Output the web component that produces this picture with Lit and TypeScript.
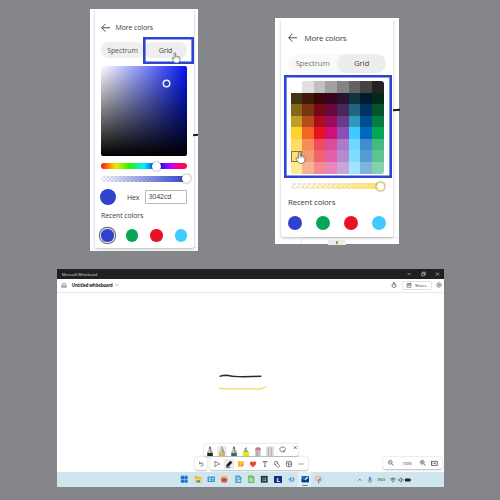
import { LitElement, html, css, svg, nothing } from "lit";
import { customElement, property } from "lit/decorators.js";
import { classMap } from "lit/directives/class-map.js";

const RECENT = ["#3042cd", "#07a556", "#e81226", "#40cbff"];

const BASE = ["#ffd22e", "#f26522", "#e81224", "#d10f7a", "#904db5", "#3fcbff", "#0068bf", "#06a556"];
const SHADES = ["#40360f", "#41190b", "#3c0409", "#35051f", "#27142f", "#12333f", "#001b31", "#022a17"];
const GRAYS = ["#ffffff", "#e0e0e0", "#c1c1c1", "#a2a2a2", "#838383", "#626262", "#434343", "#222222"];

const mix = (c: string, t: string, a: number) => {
  const p = (h: string, i: number) => parseInt(h.slice(i, i + 2), 16);
  return `rgb(${[1, 3, 5].map((i) => Math.round(p(c, i) * (1 - a) + p(t, i) * a)).join(",")})`;
};

const GRID = [
  GRAYS,
  SHADES,
  BASE.map((c) => mix(c, "#000000", 0.5)),
  BASE.map((c) => mix(c, "#000000", 0.25)),
  BASE,
  BASE.map((c) => mix(c, "#ffffff", 0.25)),
  BASE.map((c) => mix(c, "#ffffff", 0.34)),
  BASE.map((c) => mix(c, "#ffffff", 0.5)),
];

const backArrow = html`<svg class="back" viewBox="0 0 10 10">
  <path d="M9.6 5H.8M4.7.9.7 5l4 4.1" fill="none" stroke="#333" stroke-width=".9" />
</svg>`;

const hand = html`<svg class="hand" viewBox="0 0 10 12">
  <path
    d="M3 7V1.6c0-1.3 1.6-1.3 1.6 0v3c.3-.5 1.4-.4 1.6.2.4-.5 1.4-.3 1.5.3.5-.4 1.4-.1 1.4.6v2.5C9.1 10 8 11.4 6.500 11.400H5C3.700 11.400 3.100 10.500 2.500 9.600L.9 7.400c-.6-1 .6-1.600 1.300-.9z"
    fill="#fff" stroke="#555" stroke-width=".7" stroke-linejoin="round" />
  <path d="M4.600 4.500V6.500M6.200 5V6.700M7.700 5.200V6.800" stroke="#777" stroke-width=".5" />
</svg>`;

@customElement("color-picker")
class ColorPicker extends LitElement {
  @property() mode = "spectrum";

  static styles = css`
    :host { display: block; position: relative; background: #fff; color: #3c3c3c; font-family: "Open Sans", "Noto Sans", sans-serif; }
    :host([mode="spectrum"]) { width: 108px; height: 242px; font-size: 7px; letter-spacing: -0.130px; }
    :host([mode="grid"]) { width: 124px; height: 226px; font-size: 7.900px; letter-spacing: -0.170px; }
    .card { display: flex; flex-direction: column; box-sizing: border-box; border-radius: 2px; background: #fff; box-shadow: 0 1px 3px rgba(0, 0, 0, 0.28); position: relative; z-index: 1; }
    .spectrum .card { margin: 0 4px 0 5px; height: 239px; padding: 13px 6px 0; clip-path: inset(0 -4px -3px -4px); }
    .grid .card { margin: 0 6px 0 6px; height: 219px; padding: 15px 7px 0; clip-path: inset(2px -4px -4px -4px); }
    .head { display: flex; align-items: center; gap: 5px; height: 11px; }
    .grid .head { gap: 7px; margin-top: -1px; }
    .back { width: 9.500px; height: 9.500px; }
    .tabs { display: flex; margin-top: 9px; height: 16px; border-radius: 8px; background: #f6f6f6; }
    .spectrum .tabs { width: 86px; }
    .grid .tabs { margin: 11px 0 0; height: 18.500px; border-radius: 9.500px; width: 98px; background: #f9f9f9; }
    .tab { flex: 1; display: flex; align-items: center; justify-content: center; border-radius: 10px; color: #777; }
    .spectrum .tab { background: #efefef; color: #555; }
    .spectrum .tab.on { background: #eee; }
    .tab.on { background: #ededed; color: #484848; }
    .field { position: relative; height: 90px; width: 86px; margin-top: 8px; border-radius: 2px; background: linear-gradient(to top, #000, transparent), linear-gradient(to right, #fff, #0216f2); }
    .ring { position: absolute; left: 62px; top: 14px; width: 5.500px; height: 5.500px; margin: 0.500px; border-radius: 50%; box-shadow: 0 0 0 1.500px #e8ebff; }
    .track { position: relative; width: 86px; height: 6px; border-radius: 3px; margin-top: 7px; }
    .hue { background: linear-gradient(to right, #f01818, #ffa800 12%, #e4ee00 18%, #30f000 33%, #00f0ff 50%, #0018f0 66%, #c800ff 82%, #ff0070 92%, #f01830); }
    .alpha { background: linear-gradient(to right, #3042cd00, #3042cd), repeating-conic-gradient(#e4e4e8 0 25%, #fff 0 50%) 0 0 / 4px 4px; }
    .spectrum .alpha { margin-top: 6.500px; }
    .grid .alpha { width: 94px; margin: 5px 0 0 3px; background: linear-gradient(to right, #ffdf6a00, #ffdf6a), repeating-conic-gradient(#e6e4dc 0 25%, #fff 0 50%) 0 0 / 5px 5px; }
    .knob { position: absolute; top: -1.500px; width: 9px; height: 9px; border-radius: 50%; background: #fff; box-shadow: 0 0 1.500px rgba(0, 0, 0, 0.75); }
    .hue .knob { left: 51px; }
    .alpha .knob { right: -4px; }
    .grid .alpha .knob { right: 0; box-sizing: border-box; border: 1px solid #ffe07a; }
    .hexrow { display: flex; align-items: center; height: 16px; margin-top: 7.500px; }
    .swatch { width: 12.500px; height: 12.500px; border-radius: 50%; }
    .hexrow .swatch { width: 16px; height: 16px; margin-left: -1px; }
    .hexrow .label { width: 18px; margin-left: 11px; }
    .input { box-sizing: border-box; width: 42px; height: 13.500px; border: 1px solid #b8b8b8; border-radius: 1px; padding-left: 2.500px; line-height: 11.500px; }
    .recent { margin-top: 5.500px; height: 10px; line-height: 10px; }
    .grid .recent { margin-top: 7.500px; width: 60px; }
    .row { display: flex; justify-content: space-between; margin-top: 8.500px; width: 86px; }
    .grid .row { width: 98px; margin-top: 9.500px; }
    .grid .row .swatch { width: 14px; height: 14px; }
    .spectrum .row .swatch:first-child { box-shadow: 0 0 0 1px #e7e7e7, 0 0 0 2.200px #777; }
    .frame { position: absolute; z-index: 2; box-shadow: inset 0 0 0 2.600px #2e43cf; box-sizing: border-box; left: 53px; top: 28px; width: 51px; height: 27px; }
    .grid .frame { position: relative; left: auto; top: auto; width: 108px; height: 103px; margin: 2.500px 0 0 -4.500px; padding: 6px 7px; }
    .cells { display: grid; grid-template: repeat(8, 1fr) / repeat(8, 1fr); width: 93px; height: 92.500px; border-radius: 3px; overflow: hidden; }
    .picked { position: absolute; left: 7px; top: 75.500px; width: 11.500px; height: 11.500px; box-sizing: border-box; border: 1px solid #8b7741; }
    .hand { position: absolute; z-index: 3; width: 10px; height: 11.500px; left: 81px; top: 43px; }
    .grid .hand { left: 11.500px; top: 76px; width: 11px; height: 13px; }
    .stroke { position: absolute; z-index: 2; right: 0; top: 125px; width: 5px; height: 2px; background: #191919; transform: rotate(-5deg); }
    .grid .stroke { top: 91px; width: 6.500px; }
    .behind { position: absolute; left: 24px; right: 0; bottom: 0; height: 3px; border-top: 1px solid #ececec; background: #fbfbfb; }
    .grid .behind { left: 26px; height: 6px; border-left: 1px solid #ececec; border-radius: 4px 0 0 0; background: #fff; }
    .tile { position: absolute; left: 26px; top: 1.500px; width: 18px; height: 5px; background: #ececec; border-radius: 2px 2px 0 0; }
    .tile::after { content: ""; position: absolute; left: 8px; top: 1.500px; width: 2px; height: 3px; background: #a5964c; }
  `;

  render() {
    const spectrum = this.mode === "spectrum";
    return html`<div class=${classMap({ spectrum, grid: !spectrum })}>
      <div class="card">
        <div class="head">${backArrow}<span>More colors</span></div>
        <div class="tabs">
          <div class="tab">Spectrum</div>
          <div class="tab on">Grid</div>
        </div>
        ${spectrum
          ? html`<div class="field"><div class="ring"></div></div>
              <div class="track hue"><div class="knob"></div></div>
              <div class="track alpha"><div class="knob"></div></div>
              <div class="hexrow">
                <div class="swatch" style="background:${RECENT[0]}"></div>
                <span class="label">Hex</span>
                <div class="input">3042cd</div>
              </div>`
          : html`<div class="frame">
                <div class="cells">${GRID.flat().map((c) => html`<div style="background:${c}"></div>`)}</div>
                <div class="picked"></div>
                ${hand}
              </div>
              <div class="track alpha"><div class="knob"></div></div>`}
        <div class="recent">Recent colors</div>
        <div class="row">${RECENT.map((c) => html`<div class="swatch" style="background:${c}"></div>`)}</div>
      </div>
      ${spectrum ? html`<div class="frame"></div>${hand}` : nothing}
      <div class="behind">${spectrum ? nothing : html`<div class="tile"></div>`}</div>
      <div class="stroke"></div>
    </div>`;
  }
}

const icon = (body: unknown, cls = "") => html`<svg class="ic ${cls}" viewBox="0 0 10 10">${body}</svg>`;

const pen = (tip: string, band: string) =>
  icon(svg`<path d="M2.300 10V6.200L4.300 1.200Q5 0 5.700 1.200L7.700 6.200V10z" fill="#a2a2a2"/><path d="M2.300 10V6.200L4.300 1.200 5 .7V10z" fill="#fff" opacity=".35"/><path d="M4 2.400 5 .2l1 2.200z" fill=${tip}/><path d="M2.300 7h5.400v3H2.300z" fill=${band}/>`);

const PENS = [
  pen("#222", "#242424"),
  pen("#d8a42c", "#dcb83c"),
  pen("#333", "#3f6378"),
  icon(svg`<path d="M3.300 6V2.500L6 .8V6z" fill="#aaa"/><path d="M1.800 10V6.500L3.500 4.500h3L8.200 6.500V10z" fill="#dcec16"/><path d="M3.500 4.500h3l1 1.500h-5z" fill="#999"/>`),
  icon(svg`<path d="M2.300 10V3Q2.300 1.500 4 1.500h2Q7.700 1.500 7.700 3v7z" fill="#c0c0c0"/><path d="M2.300 4.200V3Q2.300 1.200 5 1.200T7.700 3v1.200z" fill="#e66d7d"/><path d="M4.200 5v5" stroke="#999" stroke-width=".8"/>`),
  icon(svg`<path d="M1.300 10V1.500Q1.300.5 2.300.5h5.400Q8.700.5 8.700 1.500V10z" fill="#d8d8d8"/><path d="M3.500 1.500V10M6.500 1.500V10" stroke="#b0b0b0" stroke-width=".9"/>`),
  icon(svg`<path d="M7 5A2.900 2.500 0 1 1 7.600 3.700M5 4.600l2.400.2" fill="none" stroke="#444" stroke-width=".7"/>`),
  icon(svg`<path d="m4 .3 2.500 2.500m0-2.500L4 2.800" stroke="#333" stroke-width=".75"/>`),
];

const TOOLS = [
  icon(svg`<path d="M3 2.300v5.500l1.600-1.500 3-1.300z" fill="none" stroke="#555" stroke-width=".7" stroke-linejoin="round"/>`),
  icon(svg`<path d="m3 5.700 3.500-3.600L8 3.600 4.500 7 2.700 7.300zM2 8.200h4.200" fill="#111" stroke="#111" stroke-width=".7"/>`),
  icon(svg`<path d="M2 2.300h6v3.500L6 7.800H2z" fill="#ffc13b"/><path d="M5 5.800h3L6 7.800z" fill="#ec7a28"/><path d="M2 2.300h2v5.500H2z" fill="#ffb52a"/>`),
  icon(svg`<path d="M5 8.300C-.3 4.700 2 1.200 5 3.100 8 1.200 10.300 4.700 5 8.300z" fill="#f1472c"/>`),
  icon(svg`<path d="M3 3.500V2.600h4v.9M5 2.600v5M4.200 7.600h1.600" fill="none" stroke="#444" stroke-width=".75"/>`),
  icon(svg`<circle cx="4" cy="4" r="1.800" fill="none" stroke="#444" stroke-width=".65"/><rect x="4" y="5.200" width="4" height="2.500" rx=".8" transform="rotate(45 6 6)" fill="#fff" stroke="#444" stroke-width=".65"/>`),
  icon(svg`<rect x="2.400" y="2.400" width="5.200" height="5.200" rx="1" fill="none" stroke="#444" stroke-width=".65"/><path d="M2.400 4h5.200M4.500 4v3.500M4.500 5.700h3" stroke="#444" stroke-width=".55"/>`),
  icon(svg`<path d="M2.700 4.600h1v.9h-1zM4.600 4.600h1v.9h-1zM6.500 4.600h1v.9h-1z" fill="#555"/>`),
];

const APPS = [
  icon(svg`<path d="M1 1h3.800v3.800H1zM5.200 1H9v3.800H5.200zM1 5.200h3.800V9H1zM5.200 5.200H9V9H5.200z" fill="#1577cf"/>`),
  icon(svg`<path d="M1 1.500h3l1 1h4.200v6.200H1z" fill="#e9aa27"/><path d="M1 3.800h8.200v4.900H1z" fill="#ffd35a"/><path d="M3 6.300h4v2.400H3z" fill="#3487ce"/>`),
  icon(svg`<rect x=".6" y="1.700" width="8.800" height="6.600" rx=".6" fill="#3c98d5"/><circle cx="3.500" cy="4.300" r="1" fill="#fff"/><path d="M2 7q1.500-2.500 3 0zM6 3.500h2v1.300H6zM6 5.700h2v.9H6z" fill="#d5f1ff"/>`),
  icon(svg`<circle cx="5" cy="5.200" r="4" fill="#f7602b"/><path d="M1.600 2.800Q5-.5 8.200 2.700L9 5Q6 3.500 1.600 4z" fill="#ffb72b"/><circle cx="5" cy="5.400" r="1.900" fill="#7650bf"/>`),
  icon(svg`<path d="M1.500.5h5.100l2 2V9.500H1.500z" fill="#4a9dcc"/><path d="M3 3h3.500M3 4.500h4M3 6h1.500M3 7.500h1.500" stroke="#e8f8ff" stroke-width=".7"/><path d="M5 5.800h2.500V8H5z" fill="#d9efd0"/>`),
  icon(svg`<path d="M1.500.5h5.100l2 2V9.500H1.500z" fill="#5eb657"/><path d="M3 2.600h3M3 4.300h4v3.500H3zM5 4.300v3.500M3 6h4" fill="none" stroke="#e6ffe0" stroke-width=".65"/>`),
  icon(svg`<path d="M1 1h8v8H1z" fill="#173650"/><path d="M2.800 2.800h2v2h-2z" fill="#a55d3f"/><path d="M5.200 2.800h2v2h-2z" fill="#57a845"/><path d="M2.800 5.200h2v2h-2z" fill="#2c9be0"/><path d="M5.200 5.200h2v2h-2z" fill="#e1b037"/>`),
  html`<span class="lapp">L</span>`,
  icon(svg`<path d="m1 5 4-3v6z" fill="#8bbfe3"/><circle cx="5.800" cy="5.300" r="2.800" fill="#5b93cf"/><path d="M5 1.500h1.200v5.800H5z" fill="#c9daeb"/><circle cx="6.400" cy="5.700" r=".9" fill="#e8eef5"/>`),
  icon(svg`<path d="M.7 1.200h8.600v7.300H.7z" fill="#1667c4"/><path d="M.7 4.500q3 3 8.600-1v5H.7z" fill="#0a3484"/><path d="m4.200 5.200 3-3 1 1-3 3z" fill="#e7f7ff"/>`),
  icon(svg`<circle cx="4.700" cy="4" r="2.700" fill="#e8edf0" stroke="#d3835f" stroke-width=".8"/><path d="m4.400 3.700 1.400 5.500M7.800 2.500 5 7.500" stroke="#c96a52" stroke-width=".8"/><circle cx="7.600" cy="5.700" r="1.200" fill="none" stroke="#4a8fbd" stroke-width=".8"/><circle cx="5.400" cy="8.800" r=".9" fill="#67747c"/>`),
];

const magnifier = (plus: boolean) =>
  icon(svg`<circle cx="4.300" cy="4.300" r="1.900" fill="none" stroke="#444" stroke-width=".65"/><path d="m5.700 5.700 2 2M3.300 4.300h2" stroke="#444" stroke-width=".65"/>${plus ? svg`<path d="M4.300 3.300v2" stroke="#444" stroke-width=".65"/>` : nothing}`);

@customElement("whiteboard-window")
class WhiteboardWindow extends LitElement {
  static styles = css`
    :host { display: flex; flex-direction: column; width: 387px; height: 218px; background: #fff; color: #333; font: 4px "Open Sans", "Noto Sans", sans-serif; white-space: nowrap; }
    .ic { width: 10px; height: 10px; flex: none; display: block; }
    .title { display: flex; align-items: center; height: 10px; background: #202020; color: #ddd; padding: 0 0 0 5px; font-size: 3.700px; letter-spacing: -0.120px; }
    .grow { flex: 1; }
    .title .ic { width: 14px; height: 10px; }
    .head { display: flex; align-items: center; height: 12.500px; padding: 0 0 0 1.500px; box-shadow: 0 0.500px 1.500px rgba(0, 0, 0, 0.22); box-sizing: border-box; }
    .doc { font-weight: 700; color: #222; font-size: 4.300px; padding-left: 3.300px; letter-spacing: -0.150px; }
    .doc + .ic { margin-left: -1px; }
    .share { display: flex; align-items: center; width: 30.500px; height: 9.500px; box-sizing: border-box; border: 0.500px solid #e2e2e2; border-radius: 2px; padding-left: 1.500px; gap: 1px; margin: 0 2px 0 3px; font-size: 4.300px; }
    .canvas { flex: 1; display: flex; flex-direction: column; align-items: center; }
    .ink { width: 60px; height: 22px; margin: 79px 16.500px 0 0; display: block; flex: none; }
    .dock { margin-top: auto; width: 100%; display: flex; flex-direction: column; }
    .bar { display: flex; align-items: center; background: #fff; border-radius: 2.500px; box-shadow: 0 0.500px 2px rgba(0, 0, 0, 0.28); box-sizing: border-box; }
    .pens { width: 94px; height: 12.500px; margin-left: 147px; padding: 0 0 0.500px 1px; align-items: flex-end; gap: 2.100px; }
    .sel { background: #ebebeb; border-radius: 1.500px; }
    .tools { display: flex; margin: 1px 0 2px 138px; gap: 2.500px; }
    .undo { width: 12px; height: 13px; justify-content: center; }
    .main { width: 98.500px; height: 13px; padding-left: 2px; gap: 2.100px; }
    .zoom { width: 59.500px; height: 12px; margin-left: 72px; padding-left: 3.500px; font-size: 3.900px; }
    .zoom .ic:nth-of-type(1) { margin-right: 6px; }
    .zoom .ic:nth-of-type(2) { margin-right: 1.500px; }
    .zoom .pct + .ic { margin-left: -1.500px; }
    .zoom .ic:nth-of-type(3) { width: 11px; height: 11px; }
    .pct { width: 17px; }
    .taskbar { display: flex; align-items: center; height: 15px; background: #cfe6ee; padding-left: 121px; }
    .app { width: 13.350px; height: 15px; display: flex; justify-content: center; align-items: center; position: relative; flex: none; }
    .app .ic { width: 8.500px; height: 8.500px; }
    .lapp { background: #162c89; color: #fff; font-weight: 700; font-size: 6px; line-height: 8px; text-align: center; width: 7.500px; height: 7.500px; }
    .active { background: #e2f1f6; }
    .active::after { content: ""; position: absolute; bottom: 1px; left: 4px; width: 6px; height: 1px; background: #378fd1; border-radius: 1px; }
    .tray { display: flex; align-items: center; margin-left: 31.500px; }
    .tray .ic { width: 8px; height: 8px; margin-right: -0.900px; }
    .tray .mic { margin: 0 3.500px 0 2.500px; }
    .tray .eng { width: 12px; font-size: 3.900px; }
  `;

  render() {
    return html`
      <div class="title">
        <span>Microsoft Whiteboard</span><span class="grow"></span>
        ${icon(svg`<path d="M3.500 5h3.200" stroke="#ddd" stroke-width=".6"/>`)}
        ${icon(svg`<path d="M3.700 4.200h2.600v2.600H3.700zM4.600 4.100V3.200h2.700v2.700H6.400" fill="none" stroke="#ddd" stroke-width=".6"/>`)}
        ${icon(svg`<path d="m4 3.500 3 3m0-3-3 3" stroke="#ddd" stroke-width=".6"/>`)}
      </div>
      <div class="head">
        ${icon(svg`<path d="M2.900 4.800 5 2.900l2.100 1.900v2.600H5.800V5.700H4.200v1.700H2.900z" fill="none" stroke="#444" stroke-width=".6"/>`)}
        <span class="doc">Untitled whiteboard</span>
        ${icon(svg`<path d="m3.600 4.300 1.500 1.400 1.500-1.400" fill="none" stroke="#777" stroke-width=".6"/>`)}
        <span class="grow"></span>
        ${icon(svg`<circle cx="5" cy="5.500" r="2" fill="none" stroke="#444" stroke-width=".65"/><path d="M4 2.500h2M5 3.500v2" stroke="#444" stroke-width=".6"/>`)}
        <div class="share">
          ${icon(svg`<path d="M3 3.500v3.800h4V3.500zM3 5h4M5 3v3M6 2.700l1.400 1" fill="none" stroke="#555" stroke-width=".6"/>`)}
          <span>Share</span>
        </div>
        ${icon(svg`<circle cx="5" cy="5" r="2.200" fill="none" stroke="#444" stroke-width=".8" stroke-dasharray="1.100 .3"/><circle cx="5" cy="5" r=".8" fill="none" stroke="#444" stroke-width=".6"/>`)}
      </div>
      <div class="canvas">
        <svg class="ink" viewBox="0 0 60 22">
          <path d="M7.500 5.300Q11 4.200 15 4.200 20 5.500 26 5.600 34 5.900 49.300 5.300" fill="none" stroke="#2a2a2a" stroke-width="1.400" />
          <path d="M6.500 17.300Q17 18.100 49 17.800L54.500 15.500" fill="none" stroke="#f5d95f" stroke-width="1.300" />
        </svg>
        <div class="dock">
          <div class="bar pens">${PENS.map((p, i) => html`<div class=${classMap({ sel: i === 1 })}>${p}</div>`)}</div>
          <div class="tools">
            <div class="bar undo">${icon(svg`<path d="M3.500 2.700v2h2M3.600 4.600Q6.800 2.700 7 5.200T4.700 7.200" fill="none" stroke="#555" stroke-width=".65"/>`)}</div>
            <div class="bar main">${TOOLS.map((t, i) => html`<div class=${classMap({ sel: i === 1 })}>${t}</div>`)}</div>
            <div class="bar zoom">
              ${magnifier(false)}<span class="pct">100%</span>${magnifier(true)}
              ${icon(svg`<rect x="2.300" y="3" width="5.200" height="3.800" fill="none" stroke="#444" stroke-width=".65"/><path d="M3.700 4v1.800M6.200 4v1.800M4.800 4.500h.4v.7h-.4z" stroke="#555" stroke-width=".5"/>`)}
            </div>
          </div>
        </div>
      </div>
      <div class="taskbar">
        ${APPS.map((a, i) => html`<div class=${classMap({ app: true, active: i === 9 })}>${a}</div>`)}
        <div class="tray">
          ${icon(svg`<path d="m2.600 6 2.200-2.200L7 6" fill="none" stroke="#444" stroke-width=".8"/>`)}
          ${icon(svg`<rect x="3.600" y=".8" width="2.800" height="5.200" rx="1.400" fill="#4d8bd0"/><path d="M2.500 4.500q0 3 2.500 3t2.500-3M5 7.500V9" fill="none" stroke="#4d7fc0" stroke-width=".8"/>`, "mic")}
          <span class="eng">ENG</span>
          ${icon(svg`<path d="M1.500 4Q5 1 8.500 4M2.800 5.500Q5 3.500 7.200 5.500" fill="none" stroke="#333" stroke-width=".9"/><circle cx="5" cy="7" r=".9" fill="#333"/>`)}
          ${icon(svg`<path d="M2 4h1.300l2-1.800v5.600l-2-1.800H2zM6.500 3.900l1.800 2m0-2-1.800 2" fill="none" stroke="#333" stroke-width=".7"/>`)}
          ${icon(svg`<rect x="1.300" y="3" width="6.700" height="4" rx=".8" fill="#222"/><path d="M8.500 4.200v1.600" stroke="#222" stroke-width=".8"/>`)}
        </div>
      </div>`;
  }
}

@customElement("app-root")
class AppRoot extends LitElement {
  static styles = css`
    :host { display: flex; flex-direction: column; box-sizing: border-box; width: 500px; height: 500px; background: #85868a; padding: 9px 0 0; overflow: hidden; }
    .pickers { display: flex; gap: 77px; padding-left: 90px; height: 260px; }
    .second { margin-top: 9px; }
    whiteboard-window { margin-left: 57px; }
  `;

  render() {
    return html`
      <div class="pickers">
        <color-picker mode="spectrum"></color-picker>
        <color-picker class="second" mode="grid"></color-picker>
      </div>
      <whiteboard-window></whiteboard-window>
    `;
  }
}
